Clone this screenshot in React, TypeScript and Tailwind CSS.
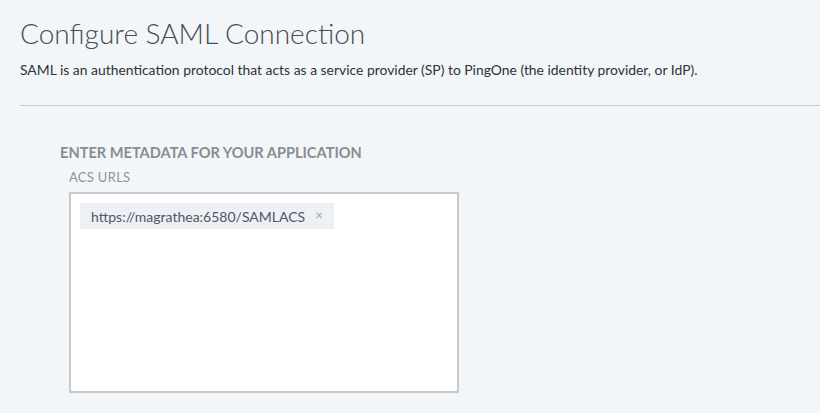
export default function App() {
  return (
    <div
      className="min-h-[413px] w-full bg-[#f3f6f9] pl-5 pt-[15px]"
      style={{ fontFamily: "Lato, 'Open Sans', sans-serif" }}
    >
      <h1 className="text-[28px] font-light leading-[36px] text-[#474c52]">
        Configure SAML Connection
      </h1>
      <p className="mt-[10px] text-[13.9px] leading-[18px] text-[#2d3237]">
        SAML is an authentication protocol that acts as a service provider (SP) to PingOne (the identity provider, or IdP).
      </p>
      <div className="mt-[26px] h-px bg-[#c6cace]" />

      <div className="pl-10 pt-[38px]">
        <h2 className="text-[14.6px] font-bold leading-[18px] text-[#878c92]">
          ENTER METADATA FOR YOUR APPLICATION
        </h2>
        <div className="pl-[9px]">
          <label className="mt-[7px] block text-[13px] leading-[16px] tracking-[0.3px] text-[#8e9399]">
            ACS URLS
          </label>
          <div className="mt-[7px] h-[201px] w-[390px] border-2 border-[#c7c9cc] bg-white p-[9px]">
            <span className="inline-flex h-[26px] items-center gap-[10px] bg-[#edf1f5] pl-[11px] pr-[11px] text-[14px] text-[#4b5766]">
              https://magrathea:6580/SAMLACS
              <span className="text-[13px] text-[#9aa1a9]">×</span>
            </span>
          </div>
        </div>
      </div>
    </div>
  );
}
